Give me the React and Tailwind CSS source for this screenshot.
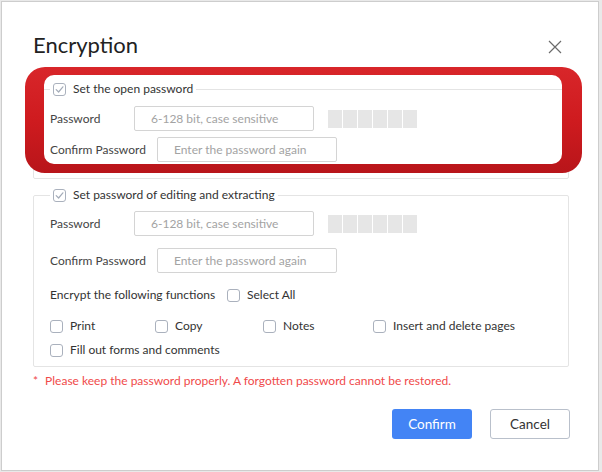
import React from 'react';

const font = { fontFamily: 'Lato, "Open Sans", Arial, sans-serif' };

function Box({ checked }) {
  return (
    <span className="w-[13px] h-[13px] shrink-0 rounded-[3px] border border-[#aab1bd] bg-white flex items-center justify-center">
      {checked && (
        <svg width="9" height="9" viewBox="0 0 9 9" fill="none">
          <path d="M1.2 4.6 L3.6 7 L7.9 1.8" stroke="#a3abb8" strokeWidth="1.2" strokeLinecap="round" strokeLinejoin="round" />
        </svg>
      )}
    </span>
  );
}

function Check({ label, checked, className = '' }) {
  return (
    <label className={`flex items-center gap-[7px] text-[12px] text-[#333] ${className}`}>
      <Box checked={checked} />
      <span>{label}</span>
    </label>
  );
}

function Strength() {
  return (
    <div className="flex gap-[1px] ml-[14px] h-[18px]">
      {[0, 1, 2, 3, 4, 5].map(i => (
        <span key={i} className="w-[14px] h-full bg-[#e6e6e6]"></span>
      ))}
    </div>
  );
}

function Field({ label, labelWidth, placeholder, strength, className = '' }) {
  return (
    <div className={`flex items-center h-[25px] ${className}`}>
      <span className={`${labelWidth} shrink-0 text-[12px] text-[#444]`}>{label}</span>
      <input
        type="password"
        placeholder={placeholder}
        className="w-[180px] h-[25px] border border-[#d4d4d4] rounded-[2px] pl-[16px] text-[12px] outline-none placeholder:text-[#a3a3a3] bg-white"
        style={font}
      />
      {strength && <Strength />}
    </div>
  );
}

function Legend({ label }) {
  return (
    <legend className="px-[3px] h-[20px] flex items-center">
      <Check label={label} checked />
    </legend>
  );
}

export default function App() {
  return (
    <div className="w-[602px] h-[472px] bg-[#e9e9e9] pt-[1px] pl-[1px]" style={font}>
      <div className="relative w-[598px] h-[470px] bg-white border border-[#cdcdcd] flex flex-col">
        {/* Title */}
        <div className="flex items-center justify-between h-[30px] mt-[28px] pl-[31px] pr-[36px]">
          <h1 className="text-[22px] text-[#222] leading-none">Encryption</h1>
          <svg width="14" height="14" viewBox="0 0 14 14" className="mt-[4px]">
            <path d="M1 1 L13 13 M13 1 L1 13" stroke="#6b6b6b" strokeWidth="1.2" />
          </svg>
        </div>

        {/* Open password */}
        <fieldset className="mt-[19px] ml-[31px] w-[536px] border border-[#e4e4e4] rounded-[2px] pl-[16px] pb-[16px]">
          <Legend label="Set the open password" />
          <Field className="mt-[7px]" label="Password" labelWidth="w-[84px]" placeholder="6-128 bit, case sensitive" strength />
          <Field className="mt-[6px]" label="Confirm Password" labelWidth="w-[107px]" placeholder="Enter the password again" />
        </fieldset>

        {/* Editing password */}
        <fieldset className="mt-[6px] ml-[31px] w-[536px] border border-[#e4e4e4] rounded-[2px] pl-[16px] pb-[6px]">
          <Legend label="Set password of editing and extracting" />
          <Field className="mt-[6px]" label="Password" labelWidth="w-[84px]" placeholder="6-128 bit, case sensitive" strength />
          <Field className="mt-[12px]" label="Confirm Password" labelWidth="w-[107px]" placeholder="Enter the password again" />
          <div className="flex items-center h-[20px] mt-[12px]">
            <span className="w-[177px] text-[12px] text-[#333]">Encrypt the following functions</span>
            <Check label="Select All" />
          </div>
          <div className="flex items-center h-[20px] mt-[11px]">
            <Check label="Print" className="w-[105px]" />
            <Check label="Copy" className="w-[108px]" />
            <Check label="Notes" className="w-[110px]" />
            <Check label="Insert and delete pages" />
          </div>
          <div className="flex items-center h-[20px] mt-[4px]">
            <Check label="Fill out forms and comments" />
          </div>
        </fieldset>

        <p className="mt-[6px] ml-[31px] h-[16px] text-[12px] leading-[16px] text-[#f04a4a]">
          <span className="mr-[7px]">*</span>Please keep the password properly. A forgotten password cannot be restored.
        </p>

        <div className="flex justify-end gap-[18px] mt-[20px] pr-[28px]">
          <button className="w-[80px] h-[30px] rounded-[3px] bg-[#4384f5] text-white text-[13.5px]">Confirm</button>
          <button className="w-[80px] h-[30px] rounded-[3px] border border-[#b9c0cb] bg-white text-[#333] text-[13.5px]">Cancel</button>
        </div>

        {/* red highlight annotation */}
        <svg className="absolute left-[21px] top-[63px] pointer-events-none" width="561" height="112" viewBox="0 0 561 112">
          <defs>
            <linearGradient id="rg" x1="0" y1="0" x2="0" y2="1">
              <stop offset="0" stopColor="#d8262a" />
              <stop offset="0.5" stopColor="#cf1b1f" />
              <stop offset="1" stopColor="#b8151a" />
            </linearGradient>
          </defs>
          <path
            fillRule="evenodd"
            fill="url(#rg)"
            d="M22 2 H539 A20 20 0 0 1 559 22 V88 A20 20 0 0 1 539 108 H22 A20 20 0 0 1 2 88 V22 A20 20 0 0 1 22 2 Z
               M31 10 H529 A10 10 0 0 1 539 20 V89 A10 10 0 0 1 529 99 H31 A10 10 0 0 1 21 89 V20 A10 10 0 0 1 31 10 Z"
          />
        </svg>
      </div>
    </div>
  );
}
